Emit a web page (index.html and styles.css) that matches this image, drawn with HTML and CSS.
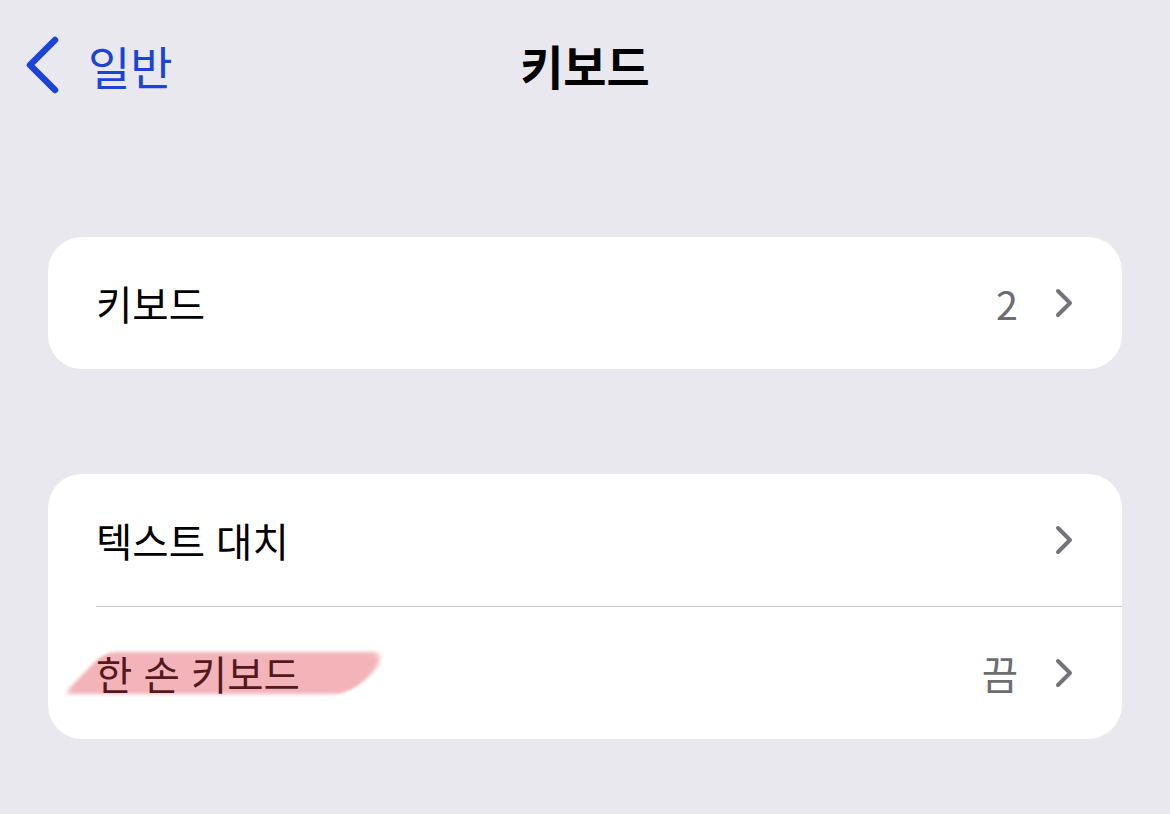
FILE: index.html
```html
<!DOCTYPE html>
<html lang="ko">
<head>
<meta charset="utf-8">
<link rel="stylesheet" href="styles.css">
</head>
<body>
<div class="screen">
  <header class="nav">
    <div class="back">
      <svg class="back-icon" width="36" height="60" viewBox="0 0 36 60"><path d="M31 5 L6 30 L31 55" fill="none" stroke="#1b43d6" stroke-width="6.5" stroke-linecap="round" stroke-linejoin="round"/></svg>
      <span class="back-label">일반</span>
    </div>
    <h1 class="title">키보드</h1>
  </header>
  <main class="content">
    <section class="card">
      <div class="row">
        <span class="label">키보드</span>
        <span class="value">2</span>
        <svg class="chev" width="20" height="30" viewBox="0 0 20 30"><path d="M4 3 L16 15 L4 27" fill="none" stroke="#737378" stroke-width="4" stroke-linecap="round" stroke-linejoin="round"/></svg>
      </div>
    </section>
    <section class="card">
      <div class="row">
        <span class="label">텍스트 대치</span>
        <svg class="chev" width="20" height="30" viewBox="0 0 20 30"><path d="M4 3 L16 15 L4 27" fill="none" stroke="#737378" stroke-width="4" stroke-linecap="round" stroke-linejoin="round"/></svg>
      </div>
      <div class="sep"></div>
      <div class="row">
        <span class="label marked"><span class="hl"></span><span class="hl-text">한 손 키보드</span></span>
        <span class="value">끔</span>
        <svg class="chev" width="20" height="30" viewBox="0 0 20 30"><path d="M4 3 L16 15 L4 27" fill="none" stroke="#737378" stroke-width="4" stroke-linecap="round" stroke-linejoin="round"/></svg>
      </div>
    </section>
  </main>
</div>
</body>
</html>
```
FILE: styles.css
```css
html, body {
  margin: 0;
  padding: 0;
}
body {
  background: #e9e8ee;
  font-family: "Noto Sans CJK KR", "Noto Sans", sans-serif;
  width: 1170px;
  height: 814px;
  overflow: hidden;
}
.screen {
  display: flex;
  flex-direction: column;
}
.nav {
  position: relative;
  height: 130px;
  display: flex;
  align-items: center;
  justify-content: center;
}
.back {
  position: absolute;
  left: 24px;
  top: 35px;
  display: flex;
  align-items: center;
  gap: 28px;
}
.back-label {
  color: #1b43d6;
  font-size: 46px;
  line-height: 60px;
}
.title {
  margin: 0;
  font-size: 47px;
  font-weight: 600;
  color: #000;
  line-height: 60px;
}
.content {
  padding: 107px 48px 0;
  display: flex;
  flex-direction: column;
  gap: 105px;
}
.card {
  background: #fff;
  border-radius: 34px;
  display: flex;
  flex-direction: column;
}
.row {
  height: 132px;
  display: flex;
  align-items: center;
  padding: 0 48px 0 48px;
}
.label {
  flex: 1;
  font-size: 39.5px;
  color: #000;
  line-height: 50px;
}
.value {
  font-size: 39.5px;
  color: #6c6c71;
  margin-right: 36px;
  line-height: 50px;
}
.chev {
  display: block;
}
.sep {
  height: 1px;
  background: #c6c6c8;
  margin-left: 48px;
}
.marked {
  position: relative;
}
.hl {
  position: absolute;
  left: -12px;
  top: 4px;
  width: 288px;
  height: 42px;
  background: #f2b4b8;
  transform: skewX(-44deg);
  border-radius: 10px 22px 16px 8px;
  filter: blur(2px);
}
.hl-text {
  position: relative;
  color: #54191d;
}
```
